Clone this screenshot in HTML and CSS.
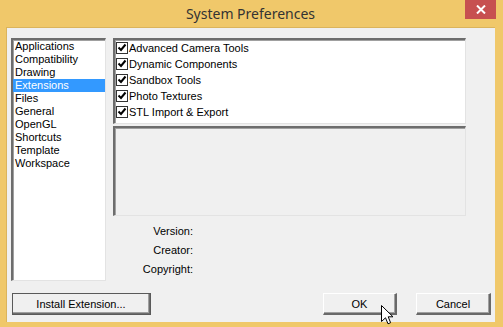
FILE: index.html
```html
<!doctype html>
<html lang="en-US">

<head>
  <meta charset="UTF-8" />
  <title>System Preferences</title>
  <link rel="stylesheet" href="styles.css">
</head>

<body>
  <div class="window">
    <div class="titlebar">
      <span></span>
      <span class="title">System Preferences</span>
      <button class="close">
        <svg width="10" height="9" viewBox="0 0 10 9">
          <path d="M1 0.5 L9 8.5 M9 0.5 L1 8.5" stroke="#fff" stroke-width="2" />
        </svg>
      </button>
    </div>

    <div class="body">
      <div class="main">
        <ul class="listbox">
          <li>Applications</li>
          <li>Compatibility</li>
          <li>Drawing</li>
          <li class="selected">Extensions</li>
          <li>Files</li>
          <li>General</li>
          <li>OpenGL</li>
          <li>Shortcuts</li>
          <li>Template</li>
          <li>Workspace</li>
        </ul>

        <div class="detail">
          <ul class="checklist">
            <li><span class="check"></span>Advanced Camera Tools</li>
            <li><span class="check"></span>Dynamic Components</li>
            <li><span class="check"></span>Sandbox Tools</li>
            <li><span class="check"></span>Photo Textures</li>
            <li><span class="check"></span>STL Import &amp; Export</li>
          </ul>
          <div class="description"></div>
          <div class="info">
            <span>Version:</span>
            <span>Creator:</span>
            <span>Copyright:</span>
          </div>
        </div>
      </div>

      <div class="actions">
        <button class="btn btn-default">Install Extension...</button>
        <span class="spacer"></span>
        <button class="btn btn-ok">OK</button>
        <button class="btn btn-cancel">Cancel</button>
      </div>
    </div>

    <svg class="cursor" width="13" height="20" viewBox="0 0 13 20">
      <path d="M0.5 0.5 V16.5 L4.5 12.8 L7 18.8 L9.6 17.7 L7.2 11.8 H12 Z" fill="#fff" stroke="#000" stroke-width="1" stroke-linejoin="miter" />
    </svg>
  </div>
</body>

</html>
```

FILE: styles.css
```css
body {
  margin: 0;
  padding: 0;
  font-family: "Liberation Sans", Arial, sans-serif;
  font-size: 11px;
  overflow: hidden;
  background-color: #f0c86a;
}

.window {
  position: relative;
  width: 503px;
  height: 327px;
  box-sizing: border-box;
  padding: 0 8px 5px 6px;
  background-color: #f0c86a;
  display: flex;
  flex-direction: column;
}

.titlebar {
  height: 27px;
  display: grid;
  grid-template-columns: 1fr auto 1fr;
  align-items: start;
}

.title {
  padding-top: 4px;
  font-family: "Noto Sans", "Open Sans", sans-serif;
  font-size: 14px;
  color: #333333;
}

.close {
  justify-self: end;
  margin-right: -1px;
  width: 31px;
  height: 19px;
  border: none;
  padding: 0;
  background-color: #c75050;
  display: flex;
  align-items: center;
  justify-content: center;
}

.body {
  flex: 1;
  background-color: #f0f0f0;
  border: 1px solid #dbb45c;
  border-width: 1px 0 0 1px;
  padding: 10px 4px 7px 4px;
  display: flex;
  flex-direction: column;
}

.main {
  display: flex;
  gap: 7px;
  height: 243px;
}

.listbox,
.checklist,
.description {
  box-sizing: border-box;
  margin: 0;
  list-style: none;
  border-style: solid;
  border-width: 2px 1px 1px 2px;
  border-color: #6d6d6d #e3e3e3 #e3e3e3 #6d6d6d;
  box-shadow: inset 1px 1px 0 #a0a0a0;
}

.listbox {
  width: 95px;
  height: 243px;
  padding: 0;
  background-color: #fff;
}

.listbox li {
  height: 13px;
  line-height: 13px;
  padding-left: 2px;
  color: #000;
}

.listbox li.selected {
  background-color: #3399ff;
  color: #fff;
}

.detail {
  width: 353px;
  display: flex;
  flex-direction: column;
}

.checklist {
  height: 86px;
  padding: 0 0 0 1px;
  background-color: #fff;
}

.checklist li {
  height: 16px;
  display: flex;
  align-items: center;
  gap: 1px;
  color: #000;
}

.check {
  width: 12px;
  height: 12px;
  box-sizing: border-box;
  border: 1px solid #333;
  background: #fff url("data:image/svg+xml,%3Csvg xmlns='http://www.w3.org/2000/svg' width='10' height='10'%3E%3Cpath d='M1.5 4.5 L4 7 L8.5 1.5' fill='none' stroke='%23000' stroke-width='2'/%3E%3C/svg%3E") center no-repeat;
}

.description {
  margin-top: 2px;
  height: 90px;
  background-color: #f0f0f0;
}

.info {
  width: 80px;
  margin-top: 6px;
  display: flex;
  flex-direction: column;
  align-items: flex-end;
  color: #000;
}

.info span {
  line-height: 19px;
}

.actions {
  margin-top: 12px;
  display: flex;
  align-items: center;
  gap: 19px;
}

.spacer {
  flex: 1;
}

.btn {
  height: 22px;
  box-sizing: border-box;
  padding: 0;
  font-family: "Liberation Sans", Arial, sans-serif;
  font-size: 11px;
  color: #000;
  background-color: #f0f0f0;
  border-style: solid;
  border-width: 1px 2px 2px 1px;
  border-color: #fff #696969 #696969 #fff;
  box-shadow: inset -1px -1px 0 #a0a0a0;
}

.btn-default {
  width: 139px;
  margin-left: 1px;
  outline: 1px solid #5a5a5a;
  outline-offset: -1px;
  border-color: #fff #6d6d6d #6d6d6d #fff;
}

.btn-ok {
  width: 74px;
}

.btn-cancel {
  width: 75px;
}

.cursor {
  position: absolute;
  left: 381px;
  top: 305px;
}
```
